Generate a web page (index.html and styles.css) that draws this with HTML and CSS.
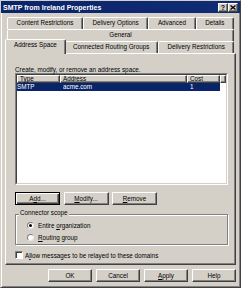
FILE: index.html
```html
<!DOCTYPE html>
<html lang="en">
<head>
<meta charset="UTF-8" />
<title>SMTP from Ireland Properties</title>
<link rel="stylesheet" href="styles.css">
</head>
<body>

<div class="window">
  <div class="titlebar">
    <span class="title">SMTP from Ireland Properties</span>
    <div class="caption-btns">
      <span class="cbtn">?</span>
      <span class="cbtn">
        <svg width="6" height="5" viewBox="0 0 6 5"><path d="M0.5 0.5 L5.5 4.5 M5.5 0.5 L0.5 4.5" stroke="#000" stroke-width="1.3" fill="none"/></svg>
      </span>
    </div>
  </div>

  <div class="content">
    <div class="tabs">
      <div class="tab-row">
        <div class="tab">Content Restrictions</div>
        <div class="tab">Delivery Options</div>
        <div class="tab">Advanced</div>
        <div class="tab">Details</div>
      </div>
      <div class="tab-row row2">
        <div class="tab">General</div>
      </div>
      <div class="tab-row row3">
        <div class="tab active">Address Space</div>
        <div class="tab">Connected Routing Groups</div>
        <div class="tab">Delivery Restrictions</div>
      </div>
    </div>

    <div class="panel">
      <div class="hint">Create, modify, or remove an address space.</div>

      <div class="list">
        <div class="list-in">
          <div class="list-head">
            <span class="hcell c-type">Type</span>
            <span class="hcell c-addr">Address</span>
            <span class="hcell c-cost">Cost</span>
            <span class="hcell c-fill"></span>
          </div>
          <div class="list-row selected">
            <span class="c-type">SMTP</span>
            <span class="c-addr">acme.com</span>
            <span class="c-cost">1</span>
          </div>
        </div>
      </div>

      <div class="btn-row">
        <div class="btn default">A<u>d</u>d...</div>
        <div class="btn"><u>M</u>odify...</div>
        <div class="btn"><u>R</u>emove</div>
      </div>

      <div class="group">
        <div class="group-title">Connector scope</div>
        <div class="radio first"><span class="dot on"></span><span>Entire <u>o</u>rganization</span></div>
        <div class="radio"><span class="dot"></span><span><u>R</u>outing group</span></div>
      </div>

      <div class="check"><span class="box"></span><span>A<u>l</u>low messages to be relayed to these domains</span></div>
    </div>

    <div class="dialog-btns">
      <div class="btn wide">OK</div>
      <div class="btn wide">Cancel</div>
      <div class="btn wide"><u>A</u>pply</div>
      <div class="btn wide">Help</div>
    </div>
  </div>
</div>

</body>
</html>
```

FILE: styles.css
```css
* {
  box-sizing: border-box;
}
body {
  margin: 0;
  font-family: "Liberation Sans", Arial, sans-serif;
  font-size: 6.3px;
  color: #000;
  background: #d4d0c8;
}
u {
  text-decoration-thickness: 0.5px;
}
.window {
  width: 241px;
  height: 288px;
  background: #d4d0c8;
  border: 1px solid;
  border-color: #d4d0c8 #404040 #404040 #d4d0c8;
  box-shadow: inset 1px 1px #fff, inset -1px -1px #808080;
}

/* title bar */
.titlebar {
  height: 12px;
  display: flex;
  align-items: center;
  justify-content: space-between;
  padding: 0 2px;
  background: linear-gradient(90deg, #0a246a, #102c76);
  color: #fff;
  font-size: 7px;
  font-weight: bold;
}
.caption-btns {
  display: flex;
}
.cbtn {
  width: 10px;
  height: 9px;
  display: flex;
  align-items: center;
  justify-content: center;
  background: #d4d0c8;
  border: 1px solid;
  border-color: #fff #404040 #404040 #fff;
  box-shadow: inset -1px -1px #808080;
  color: #000;
  font-size: 7px;
  line-height: 1;
}

.content {
  padding: 4px 4px 0;
}

/* tabs */
.tab-row {
  display: flex;
  height: 12px;
  padding: 0 2px;
}
.tab {
  flex: auto;
  padding: 0 3px;
  text-align: center;
  white-space: nowrap;
  line-height: 10px;
  background: #d4d0c8;
  border: 1px solid;
  border-bottom: none;
  border-color: #fff #404040 transparent #fff;
  border-radius: 2px 2px 0 0;
  box-shadow: inset -1px 0 #808080;
}
.row3 {
  height: 14px;
  margin-top: -2px;
  align-items: flex-end;
}
.row3 .tab {
  height: 12px;
}
.row3 .tab.active {
  height: 15px;
  margin: 0 -2px -1px;
  position: relative;
  z-index: 1;
}

/* panel */
.panel {
  height: 212px;
  padding: 12px 7px 0 9px;
  border: 1px solid;
  border-color: #fff #404040 #404040 #fff;
  box-shadow: inset -1px -1px #808080;
}
.hint {
  height: 7px;
  line-height: 7px;
}
.list {
  height: 112px;
  background: #fff;
  border: 1px solid;
  border-color: #808080 #fff #fff #808080;
}
.list-in {
  height: 100%;
  border: 1px solid;
  border-color: #404040 #d4d0c8 #d4d0c8 #404040;
}
.list-head {
  display: flex;
  height: 8px;
}
.hcell {
  height: 8px;
  padding-left: 2px;
  line-height: 6px;
  background: #d4d0c8;
  border: 1px solid;
  border-color: #fff #404040 #404040 #fff;
  box-shadow: inset -1px -1px #808080;
}
.c-type { width: 43px; }
.c-addr { width: 127px; }
.c-cost { width: 33px; }
.c-fill { flex: 1; }
.list-row {
  display: flex;
  width: 203px;
  height: 8px;
  line-height: 8px;
}
.list-row span {
  padding-left: 3px;
}
.list-row .c-type {
  padding-left: 0;
}
.list-row.selected {
  background: #0a246a;
  color: #fff;
}

/* buttons */
.btn {
  width: 45px;
  height: 13px;
  text-align: center;
  line-height: 11px;
  background: #d4d0c8;
  border: 1px solid;
  border-color: #fff #404040 #404040 #fff;
  box-shadow: inset -1px -1px #808080;
}
.btn.default {
  border-color: #000;
  box-shadow: inset 1px 1px #fff, inset -1px -1px #404040, inset -2px -2px #808080;
}
.btn-row {
  display: flex;
  gap: 3.5px;
  margin-top: 7px;
}

/* group box */
.group {
  height: 31px;
  margin-top: 9px;
  border: 1px solid #808080;
  box-shadow: inset 1px 1px #fff, 1px 1px #fff;
}
.group-title {
  width: max-content;
  margin: -6px 0 0 3px;
  padding: 0 1px;
  line-height: 8px;
  background: #d4d0c8;
}
.radio {
  display: flex;
  align-items: center;
  gap: 4px;
  height: 12px;
  padding-left: 11px;
}
.radio.first {
  margin-top: 2px;
}
.dot {
  width: 7px;
  height: 7px;
  display: flex;
  align-items: center;
  justify-content: center;
  border-radius: 50%;
  background: #fff;
  border: 1px solid;
  border-color: #808080 #e8e8e8 #e8e8e8 #808080;
}
.dot.on::after {
  content: "";
  width: 3px;
  height: 3px;
  border-radius: 50%;
  background: #000;
}

/* checkbox */
.check {
  display: flex;
  align-items: center;
  gap: 2px;
  height: 12px;
  margin-top: 4px;
}
.box {
  width: 8px;
  height: 8px;
  background: #fff;
  border: 1px solid;
  border-color: #808080 #fff #fff #808080;
  box-shadow: inset 1px 1px #404040;
}

/* dialog buttons */
.dialog-btns {
  display: flex;
  justify-content: flex-end;
  gap: 4px;
  margin-top: 4px;
}
.btn.wide {
  width: 44px;
}
```
